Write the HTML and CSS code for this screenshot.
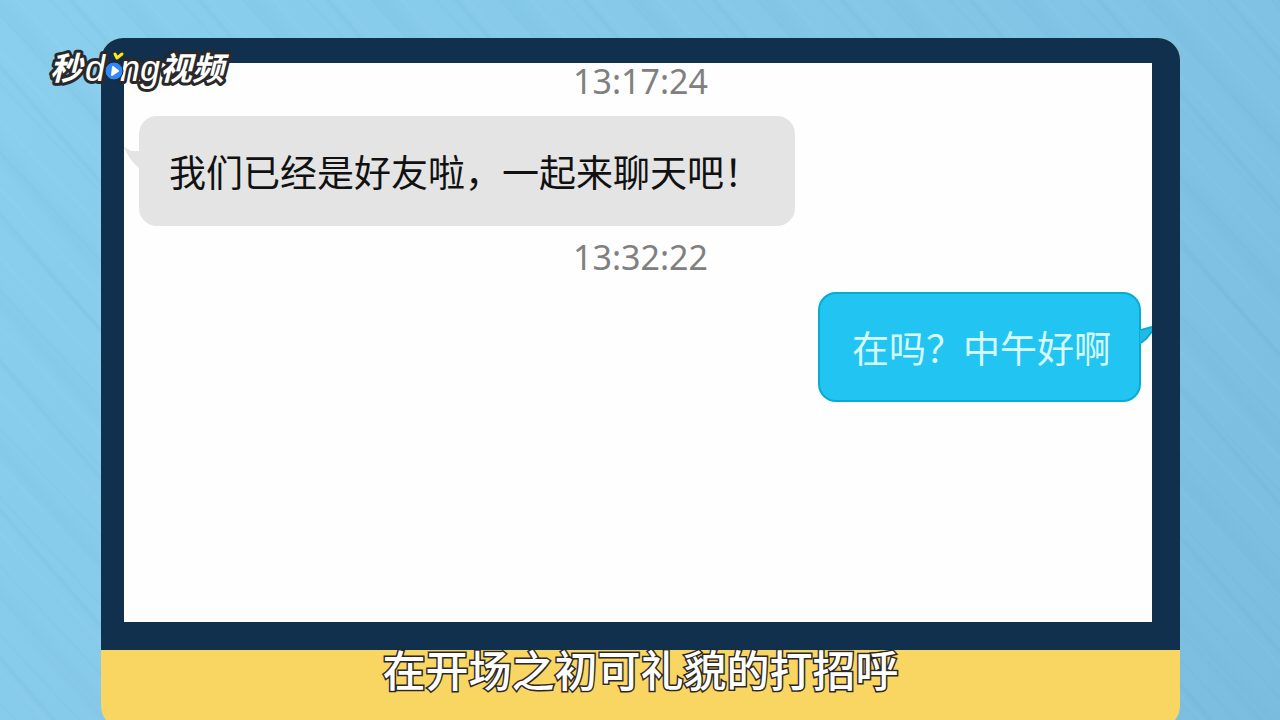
FILE: index.html
```html
<!DOCTYPE html>
<html lang="zh-CN">
<head>
<meta charset="utf-8">
<meta name="viewport" content="width=device-width, initial-scale=1">
<title>秒dong视频</title>
<link rel="stylesheet" href="styles.css">
</head>
<body>
<main class="stage">
  <article class="card">
    <section class="frame">
      <div class="chat">
        <time class="time">13:17:24</time>
        <div class="message received">
          <svg class="tail" viewBox="0 0 15 22" aria-hidden="true"><path d="M0 0 L7 4 L15 4 L15 21 Q5 13 0 0 Z" fill="#e4e4e4"/></svg>
          <p class="bubble">我们已经是好友啦，一起来聊天吧！</p>
        </div>
        <time class="time">13:32:22</time>
        <div class="message sent">
          <p class="bubble">在吗？中午好啊</p>
          <svg class="tail" viewBox="0 0 12 22" aria-hidden="true"><path d="M0 7 L12 4 L12 8 Q8 15 0 21 Z" fill="#22b9e4"/><path d="M1 7 L12 4 M12 8 Q8 15 1 20" fill="none" stroke="#08acd3" stroke-width="2"/></svg>
        </div>
      </div>
    </section>
    <p class="caption">在开场之初可礼貌的打招呼</p>
  </article>
  <svg class="logo" viewBox="0 0 200 66" role="img" aria-label="秒dong视频">
    <g class="logo-text">
      <text class="logo-cjk" x="10" y="43">秒</text>
      <text class="logo-latin" x="45" y="44">d</text>
      <text class="logo-latin" x="80" y="44">ng</text>
      <text class="logo-cjk" x="120" y="43">视频</text>
    </g>
    <circle cx="74" cy="34" r="9" fill="#3187f5" stroke="#1c2733" stroke-width="1"/>
    <path d="M73 30 L78 34 L72 38 Z" fill="#fff" stroke="#fff" stroke-width="2" stroke-linejoin="round"/>
    <path d="M75 17 L77 21 L82 17" fill="none" stroke="#2c2a20" stroke-width="5" stroke-linecap="round" stroke-linejoin="round"/>
    <path d="M75 17 L77 21 L82 17" fill="none" stroke="#f7e928" stroke-width="3" stroke-linecap="round" stroke-linejoin="round"/>
  </svg>
</main>
</body>
</html>
```
FILE: styles.css
```css
* {
  box-sizing: border-box;
}

body {
  margin: 0;
  font-family: "Noto Sans", "Noto Sans CJK SC", sans-serif;
}

.stage {
  position: relative;
  display: flex;
  height: 100vh;
  overflow: hidden;
  padding: 38px 100px 0 101px;
  background:
    repeating-linear-gradient(47deg, transparent 0 9px, rgba(40, 110, 150, 0.03) 11px, transparent 13px 31px, rgba(190, 230, 250, 0.06) 33px, transparent 36px 47px),
    repeating-linear-gradient(49deg, transparent 0 37px, rgba(40, 110, 150, 0.05) 41px, transparent 44px 71px, rgba(40, 110, 150, 0.03) 80px, transparent 97px),
    linear-gradient(120deg, #8bcfee 0%, #84c7e7 50%, #7bbddf 100%);
}

.logo {
  position: absolute;
  left: 40px;
  top: 37px;
  width: 200px;
  height: 66px;
}

.logo-text {
  fill: #fff;
  stroke: #29292b;
  stroke-width: 6px;
  stroke-linejoin: round;
  paint-order: stroke;
  font-style: italic;
}

.logo-cjk {
  font-family: "Noto Sans CJK SC", sans-serif;
  font-size: 32px;
  font-weight: 700;
}

.logo-latin {
  font-family: "Liberation Sans", sans-serif;
  font-size: 36px;
  font-weight: 400;
}

.card {
  display: flex;
  flex: 1;
  flex-direction: column;
  margin-bottom: -8px;
  overflow: hidden;
  border-radius: 22px;
  background: #f9d562;
}

.frame {
  display: flex;
  flex: 1;
  padding: 25px 28px 28px 23px;
  background: #10304e;
}

.chat {
  display: flex;
  flex: 1;
  flex-direction: column;
  background: #fefefe;
}

.time {
  padding-left: 5px;
  color: #808080;
  font-size: 34px;
  line-height: 36px;
  text-align: center;
}

.message {
  display: flex;
  align-items: flex-start;
  margin: 17px 0 13px;
}

.sent {
  justify-content: flex-end;
}

.tail {
  width: 15px;
  height: 22px;
  margin-top: 31px;
}

.sent .tail {
  width: 12px;
  margin-left: -1px;
}

.bubble {
  margin: 0;
  padding: 28px 34px 28px 30px;
  border-radius: 18px;
  background: #e4e4e4;
  color: #111;
  font-family: "Noto Sans CJK SC", sans-serif;
  font-size: 37px;
  line-height: 54px;
}

.sent .bubble {
  padding: 26px 28px 26px 32px;
  border: 2px solid #08acd3;
  background: #22c4f2;
  color: #d5faff;
}

.caption {
  height: 78px;
  margin: 0;
  color: #fff;
  font-family: "Noto Sans CJK SC", sans-serif;
  font-size: 43px;
  font-weight: 500;
  line-height: 36px;
  text-align: center;
  -webkit-text-stroke: 3px #2b2727;
  paint-order: stroke fill;
}
```
